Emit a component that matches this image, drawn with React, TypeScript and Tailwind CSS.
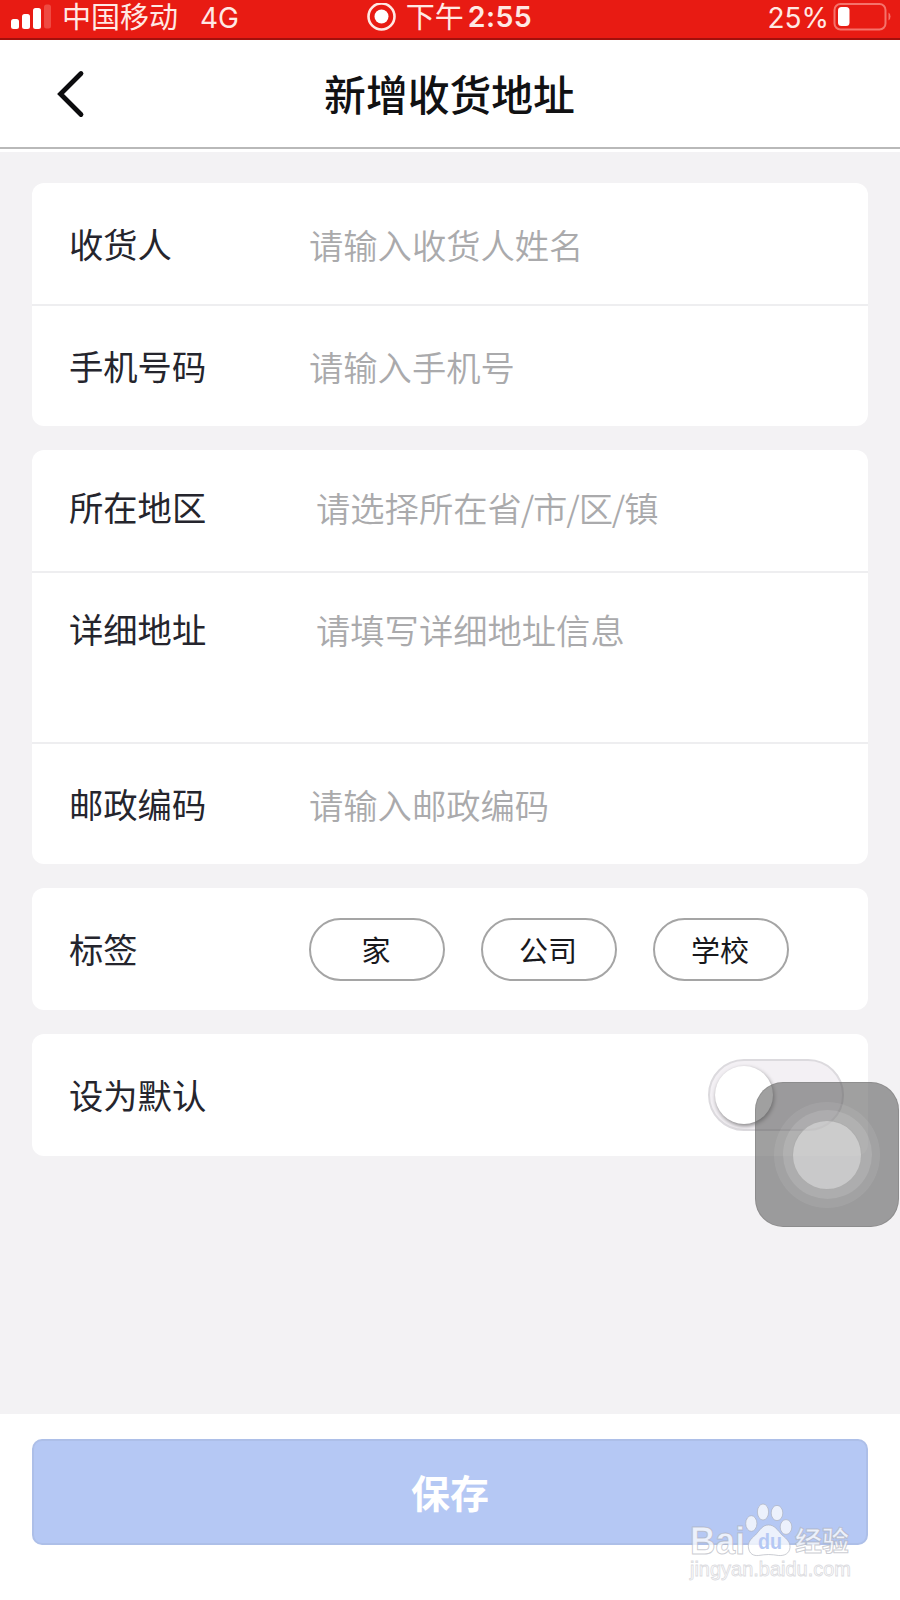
import type { ReactNode } from 'react';

const tags = ['家', '公司', '学校'];

function StatusBar() {
  return (
    <div className="flex h-10 w-full items-center justify-between border-b-2 border-[#a3100c] bg-[#e81b13] font-['Liberation_Sans','Noto_Sans_CJK_SC',sans-serif] text-[#ffe9e4]">
      <div className="flex h-full w-[300px] items-center pl-[11px]">
        <svg width="42" height="32" viewBox="0 0 42 32" className="shrink-0">
          <rect x="0" y="16" width="8" height="10" rx="2.5" fill="#fff" />
          <rect x="11" y="11" width="8" height="15" rx="2.5" fill="#fff" />
          <rect x="22" y="5" width="8" height="21" rx="2.5" fill="#fff" />
          <rect x="33" y="1.5" width="7" height="24" rx="2.5" fill="#ef4a42" />
        </svg>
        <span className="ml-[9px] pb-0.5 text-[29px] leading-[34px]">中国移动</span>
        <span className="ml-[22px] pb-[3px] font-[Inter] text-[28px] leading-none">
          4G
        </span>
      </div>
      <div className="flex h-full items-center pr-0.5">
        <svg width="32" height="32" viewBox="0 0 32 32">
          <circle cx="15.5" cy="13.5" r="13" fill="none" stroke="#ffe9e4" strokeWidth="2.6" />
          <circle cx="15.5" cy="13.5" r="7" fill="#fff" />
        </svg>
        <span className="ml-2 pb-0.5 text-[29px] leading-[34px]">下午</span>
        <span className="ml-1 pb-[3px] font-[Inter] text-[28.5px] font-semibold leading-none tracking-[0.4px]">
          2:55
        </span>
      </div>
      <div className="flex h-full w-[300px] items-center justify-end pr-[7px]">
        <span className="pb-[3px] font-[Inter] text-[28px] leading-none">25%</span>
        <svg width="60" height="32" viewBox="0 0 60 32" className="ml-1">
          <rect x="1.5" y="1" width="51" height="25.5" rx="6" fill="none" stroke="#f5736b" strokeWidth="2" />
          <rect x="5" y="4" width="11.5" height="19" rx="3.5" fill="#fff" />
          <path d="M55.500 9.500v8q2-1 2-4t-2-4" fill="#f5736b" />
        </svg>
      </div>
    </div>
  );
}

function Card({ children, className = '' }: { children: ReactNode; className?: string }) {
  return (
    <section className={`w-full overflow-hidden rounded-xl bg-white ${className}`}>
      {children}
    </section>
  );
}

function Row({
  label,
  hint,
  className = '',
  hintClass = 'pl-0',
}: {
  label: string;
  hint: ReactNode;
  className?: string;
  hintClass?: string;
}) {
  return (
    <div className={`flex pl-[37px] text-[34.3px] leading-[50px] ${className}`}>
      <span className="w-60 text-[#25252d]">{label}</span>
      <span className={`pt-px font-[350] text-[#aaaaac] ${hintClass}`}>{hint}</span>
    </div>
  );
}

function Watermark() {
  return (
    <svg
      className="absolute left-[684px] top-[1498px]"
      width="176"
      height="90"
      viewBox="0 0 176 90"
      fontFamily="'Liberation Sans', 'Noto Sans CJK SC', sans-serif"
    >
      <g fill="#fff" fillOpacity="0.75" stroke="#a9abb5" strokeOpacity="0.6" strokeWidth="1">
        <text x="6" y="55.500" fontSize="38" fontWeight="700" textLength="55" lengthAdjust="spacingAndGlyphs">
          Bai
        </text>
        <ellipse cx="67.3" cy="25.5" rx="5.6" ry="7.8" />
        <ellipse cx="79" cy="14" rx="5.6" ry="8" />
        <ellipse cx="93" cy="15" rx="5.8" ry="7.6" />
        <ellipse cx="102" cy="29" rx="5.8" ry="7.4" />
        <path d="M84.500 27c-6 0-8.500 5-13 10-5 4-8 8-7 13 1 6 5 8 10 7.500 3.500-.5 7-1 10-1s7 .5 10 1c6 .5 11-2 11.500-8 .3-5-3-8.500-8-12.500-4.500-5-7.500-10-13.500-10z" />
        <text x="111" y="53" fontSize="27" fontWeight="700" textLength="54" lengthAdjust="spacingAndGlyphs">
          经验
        </text>
      </g>
      <text x="74" y="51" fontSize="22" fontWeight="700" fill="#b5c8f4" textLength="24" lengthAdjust="spacingAndGlyphs">
        du
      </text>
      <text x="6" y="78" fontSize="19.5" fill="#fff" stroke="#dcdcdf" strokeWidth="0.8" textLength="161" lengthAdjust="spacingAndGlyphs">
        jingyan.baidu.com
      </text>
    </svg>
  );
}

const slash = <span className="-mx-[1.1px]">/</span>;

function App() {
  return (
    <main className="relative flex h-[1600px] w-[900px] flex-col overflow-hidden bg-[#f3f2f4] font-['Noto_Sans_CJK_SC',sans-serif]">
      <StatusBar />
      <header className="flex h-[109px] items-center border-b-2 border-[#b9b9b9] bg-white">
        <svg width="100" height="60" viewBox="0 0 100 60" className="shrink-0">
          <path d="M81 9.500 60.500 30 81 50.500" fill="none" stroke="#0c0c0e" strokeWidth="4.800" strokeLinecap="round" />
        </svg>
        <h1 className="flex-1 pr-[101px] text-center text-[41.8px] font-medium leading-none text-[#111113]">
          新增收货地址
        </h1>
      </header>
      <div className="h-[3px] bg-white" />

      <div className="flex flex-1 flex-col gap-6 px-8 pt-[31px]">
        <Card className="h-[243px]">
          <Row label="收货人" hint="请输入收货人姓名" className="h-[121px] pt-[35px]" />
          <Row label="手机号码" hint="请输入手机号" className="h-[122px] border-t-2 border-[#eeeef0] pt-[34px]" />
        </Card>
        <Card className="h-[414px]">
          <Row
            label="所在地区"
            hint={<>请选择所在省{slash}市{slash}区{slash}镇</>}
            className="h-[121px] pt-[31px]"
            hintClass="pl-[7px]"
          />
          <Row label="详细地址" hint="请填写详细地址信息" className="h-[171px] border-t-2 border-[#eeeef0] pt-[30px]" hintClass="pl-[7px]" />
          <Row label="邮政编码" hint="请输入邮政编码" className="h-[122px] border-t-2 border-[#eeeef0] pt-[34px]" />
        </Card>
        <Card className="flex h-[122px] items-center pl-[37px]">
          <span className="w-60 text-[34.3px] text-[#25252d]">标签</span>
          <div className="flex gap-9">
            {tags.map((tag) => (
              <button
                key={tag}
                type="button"
                className="h-[63px] w-[136px] rounded-full border-2 border-[#a5a5a5] pr-0.5 text-[29px] leading-none text-[#18181c]"
              >
                {tag}
              </button>
            ))}
          </div>
        </Card>
        <Card className="flex h-[122px] items-center justify-between pl-[37px] pr-6">
          <span className="text-[34.3px] text-[#25252d]">设为默认</span>
          <div className="flex h-[72px] w-[136px] items-center rounded-full border-2 border-[#dcdade] bg-[#f3f0f4] pl-[5px]">
            <div className="h-[58px] w-[58px] rounded-full bg-white shadow-[1px_2px_4px_rgba(0,0,0,0.45)]" />
          </div>
        </Card>
      </div>

      <footer className="h-[186px] bg-white px-8 pt-[25px]">
        <button
          type="button"
          className="h-[106px] w-full rounded-[10px] border-2 border-[#adbfe8] bg-[#b5c8f4] pb-0.5 text-[39px] font-bold leading-none text-white"
        >
          保存
        </button>
      </footer>

      {/* floating assistive button */}
      <div className="absolute left-[755px] top-[1082px] flex h-[145px] w-[144px] items-center justify-center rounded-[28px] border border-[#777]/40 bg-[#616161]/60">
        <div className="flex h-[106px] w-[106px] items-center justify-center rounded-full bg-white/8">
          <div className="flex h-[89px] w-[89px] items-center justify-center rounded-full bg-white/12">
            <div className="h-[70px] w-[70px] rounded-full border border-[#999]/60 bg-white/35" />
          </div>
        </div>
      </div>
      <Watermark />
    </main>
  );
}

export default App;
